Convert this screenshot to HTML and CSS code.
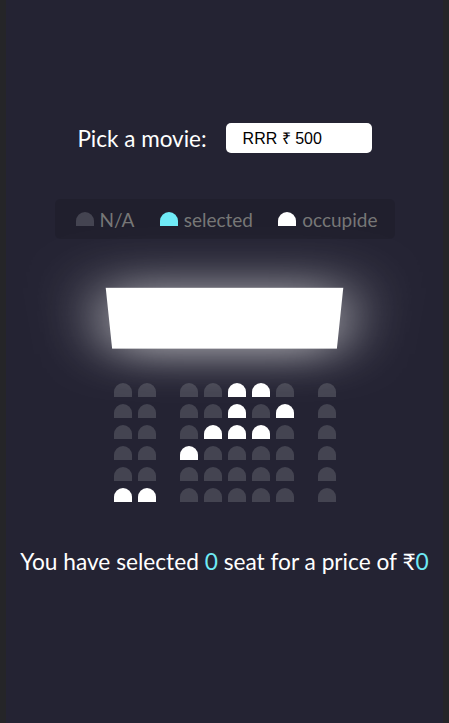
FILE: index.html
```html
<!DOCTYPE html>
<html lang="en">
<head>
<meta charset="UTF-8">
<title>Movie Seat Booking</title>
<link rel="stylesheet" href="styles.css">
</head>
<body>
<main class="page">
  <div class="movie-container">
    <label class="movie-label" for="movie">Pick a movie:</label>
    <select class="movie-select" id="movie">
      <option>RRR ₹ 500</option>
    </select>
  </div>

  <ul class="showcase">
    <li class="showcase-item"><span class="seat"></span><small>N/A</small></li>
    <li class="showcase-item"><span class="seat selected"></span><small>selected</small></li>
    <li class="showcase-item"><span class="seat occupied"></span><small>occupide</small></li>
  </ul>

  <div class="hall">
    <div class="screen"></div>
    <div class="rows">
      <div class="row"><span class="seat"></span><span class="seat"></span><span class="seat"></span><span class="seat"></span><span class="seat occupied"></span><span class="seat occupied"></span><span class="seat"></span><span class="seat"></span></div>
      <div class="row"><span class="seat"></span><span class="seat"></span><span class="seat"></span><span class="seat"></span><span class="seat occupied"></span><span class="seat"></span><span class="seat occupied"></span><span class="seat"></span></div>
      <div class="row"><span class="seat"></span><span class="seat"></span><span class="seat"></span><span class="seat occupied"></span><span class="seat occupied"></span><span class="seat occupied"></span><span class="seat"></span><span class="seat"></span></div>
      <div class="row"><span class="seat"></span><span class="seat"></span><span class="seat occupied"></span><span class="seat"></span><span class="seat"></span><span class="seat"></span><span class="seat"></span><span class="seat"></span></div>
      <div class="row"><span class="seat"></span><span class="seat"></span><span class="seat"></span><span class="seat"></span><span class="seat"></span><span class="seat"></span><span class="seat"></span><span class="seat"></span></div>
      <div class="row"><span class="seat occupied"></span><span class="seat occupied"></span><span class="seat"></span><span class="seat"></span><span class="seat"></span><span class="seat"></span><span class="seat"></span><span class="seat"></span></div>
    </div>
  </div>

  <p class="text">You have selected <span class="count">0</span> seat for a price of ₹<span class="total">0</span></p>
</main>
</body>
</html>
```

FILE: styles.css
```css
* {
  box-sizing: border-box;
}

html {
  background: #252528;
  height: 100%;
}

body {
  margin: 0 6px;
  min-height: 100%;
  background: #242333;
  color: #fff;
  font-family: "Lato", "Noto Sans", sans-serif;
}

.page {
  display: flex;
  flex-direction: column;
  align-items: center;
  padding-top: 123px;
}

.movie-container {
  display: flex;
  align-items: center;
  height: 30px;
}

.movie-label {
  font-size: 22.5px;
  color: #fff;
}

.movie-select {
  appearance: none;
  -webkit-appearance: none;
  margin-left: 19px;
  width: 146px;
  height: 30px;
  padding: 0 17px;
  border: 0;
  border-radius: 5px;
  background: #fff;
  color: #000;
  font-family: "Liberation Sans", Arial, sans-serif;
  font-size: 16px;
}

.showcase {
  list-style: none;
  margin: 46px 0 0;
  width: 340px;
  height: 40px;
  padding: 0 17px 0 21px;
  display: flex;
  align-items: center;
  justify-content: space-between;
  background: rgba(0, 0, 0, 0.1);
  border-radius: 5px;
  color: #777;
}

.showcase-item {
  display: flex;
  align-items: center;
}

.showcase-item small {
  font-size: 19px;
  margin-left: 6px;
}

.seat {
  display: block;
  width: 18px;
  height: 14px;
  background: #444451;
  border-top-left-radius: 10px;
  border-top-right-radius: 10px;
}

.seat.selected {
  background: #6feaf6;
}

.seat.occupied {
  background: #fff;
}

.hall {
  margin-top: 37px;
  display: flex;
  flex-direction: column;
  align-items: center;
}

.screen {
  width: 231px;
  height: 86px;
  background: #fff;
  transform: perspective(1100px) rotateX(-45deg);
  box-shadow: 0 4px 64px 4px rgba(255, 255, 255, 0.65);
}

.rows {
  margin-top: 21px;
  display: flex;
  flex-direction: column;
  gap: 7px;
}

.row {
  display: flex;
  gap: 6px;
}

.row .seat:nth-child(2),
.row .seat:nth-child(7) {
  margin-right: 18px;
}

.text {
  margin: 46px 0 0;
  font-size: 22.7px;
  color: #fff;
}

.count,
.total {
  color: #6feaf6;
}
```
